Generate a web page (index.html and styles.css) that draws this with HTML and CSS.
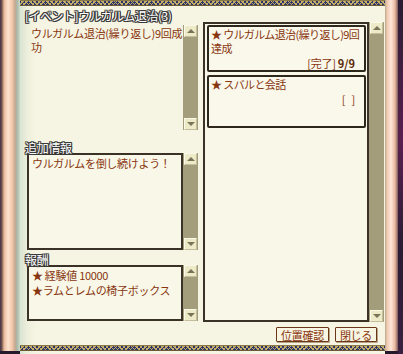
FILE: index.html
```html
<!DOCTYPE html>
<html lang="ja">
<head>
    <meta charset="UTF-8">
    <title>クエスト情報</title>
    <link rel="stylesheet" href="styles.css">
</head>
<body>
<div class="window">
    <div class="rod rod-left"></div>
    <div class="paper">
        <div class="band"></div>
        <div class="sheet">
            <div class="col-left">
                <div class="title">[イベント]ウルガルム退治(3)</div>
                <div class="pane pane-plain">
                    <div class="pane-body">ウルガルム退治(繰り返し)9回成功</div>
                    <div class="scroll"><span class="arrow up"></span><span class="arrow down"></span></div>
                </div>

                <div class="label">追加情報</div>
                <div class="pane pane-info">
                    <div class="pane-body boxed">ウルガルムを倒し続けよう！</div>
                    <div class="scroll"><span class="arrow up"></span><span class="arrow down"></span></div>
                </div>

                <div class="label label-near">報酬</div>
                <div class="pane pane-reward">
                    <div class="pane-body boxed">
                        <div>★ 経験値 10000</div>
                        <div>★ラムとレムの椅子ボックス</div>
                    </div>
                    <div class="scroll"><span class="arrow up"></span><span class="arrow down"></span></div>
                </div>
            </div>

            <div class="col-right">
                <div class="pane pane-quests">
                    <div class="pane-body boxed">
                        <div class="card">
                            <div class="card-text">★ ウルガルム退治(繰り返し)9回達成</div>
                            <div class="card-status">[完了] <b>9/9</b></div>
                        </div>
                        <div class="card card-pending">
                            <div class="card-text">★ スバルと会話</div>
                            <div class="card-status">[ &nbsp; ]</div>
                        </div>
                    </div>
                    <div class="scroll"><span class="arrow up"></span><span class="arrow down"></span></div>
                </div>
                <div class="actions">
                    <button class="btn">位置確認</button>
                    <button class="btn">閉じる</button>
                </div>
            </div>
        </div>
        <div class="band"></div>
    </div>
    <div class="rod rod-right"></div>
    <div class="outside"></div>
</div>
</body>
</html>
```

FILE: styles.css
```css
body {
    margin: 0;
    padding: 0;
    background-color: #241a2c;
    font-family: "Noto Sans CJK JP", "Noto Sans", sans-serif;
    font-size: 11px;
    letter-spacing: -0.3px;
    color: #883610;
}
.window {
    display: flex;
    width: 403px;
    height: 354px;
    overflow: hidden;
}
.rod {
    height: 351px;
}
.rod-left {
    width: 20px;
    background: linear-gradient(to right, #40304a 0, #7a5a50 2px, #e8b898 4px, #fde4d0 8px, #f4c8ac 12px, #c8a890 15px, #a8b8a8 17px, #cfdccb 20px);
}
.rod-right {
    width: 13px;
    background: linear-gradient(to right, #b8a890 0, #f0c8b0 2px, #fde6d8 6px, #eab8a0 10px, #7a5a58 13px);
}
.outside {
    width: 5px;
    background: linear-gradient(to bottom, #2a1c34, #5a2050 40%, #2a1c34 70%, #3a2040);
}
.paper {
    width: 365px;
    display: flex;
    flex-direction: column;
    background: linear-gradient(to right, #d9e4d2 0, #eef0dc 8px, #f6f4e2 16px);
}
.band {
    height: 6px;
    background:
        repeating-linear-gradient(45deg, #c0ac68 0 1px, transparent 1px 3px),
        repeating-linear-gradient(-45deg, #c0ac68 0 1px, #2c3468 1px 3px);
    border-top: 1px solid #8a7848;
    border-bottom: 1px solid #6a5a38;
    box-sizing: border-box;
}
.sheet {
    height: 339px;
    display: flex;
    gap: 5px;
    padding-left: 5px;
}
.col-left {
    width: 173px;
    display: flex;
    flex-direction: column;
}
.col-right {
    width: 181px;
    display: flex;
    flex-direction: column;
}
.title, .label {
    color: #ffffff;
    font-size: 12px;
    text-shadow: -1px 0 #3a3a3a, 1px 0 #3a3a3a, 0 -1px #3a3a3a, 0 1px #3a3a3a,
        -1px -1px #3a3a3a, 1px 1px #3a3a3a, -1px 1px #3a3a3a, 1px -1px #3a3a3a;
    position: relative;
    z-index: 1;
}
.title {
    height: 19px;
    line-height: 19px;
    letter-spacing: -0.5px;
}
.label {
    margin-top: 12px;
    height: 12px;
    line-height: 12px;
    margin-bottom: -1px;
}
.label-near {
    margin-top: 4px;
}
.pane {
    display: flex;
    line-height: 14px;
}
.pane-body {
    flex: 1;
    box-sizing: border-box;
}
.pane-plain {
    height: 105px;
}
.pane-plain .pane-body {
    padding: 1px 0 0 6px;
}
.pane-info {
    height: 97px;
}
.pane-reward {
    height: 56px;
    line-height: 15px;
}
.boxed {
    border: 2px solid #3a3226;
    background-color: #f9f7e7;
}
.pane-info .boxed, .pane-reward .boxed {
    margin-left: 2px;
    padding: 1px 0 0 3px;
}
.scroll {
    width: 15px;
    background-color: #a39d7b;
    display: flex;
    flex-direction: column;
    justify-content: space-between;
}
.arrow {
    height: 12px;
    margin: 0 1px;
    background-color: #edeac8;
    border: 1px solid;
    border-color: #fbf9e8 #c4be9c #c4be9c #fbf9e8;
    box-sizing: border-box;
    display: flex;
    align-items: center;
    justify-content: center;
}
.arrow::after {
    content: "";
    border-left: 4px solid transparent;
    border-right: 4px solid transparent;
}
.arrow.up::after {
    border-bottom: 4px solid #7a7358;
}
.arrow.down::after {
    border-top: 4px solid #7a7358;
}
.pane-quests {
    margin-top: 16px;
    height: 300px;
}
.pane-quests .boxed {
    padding: 1px 1px 0 2px;
    display: flex;
    flex-direction: column;
    gap: 3px;
}
.card {
    border: 2px solid #2e281c;
    border-radius: 2px;
    background-color: #faf8ea;
    line-height: 14px;
    padding: 0 0 0 2px;
}
.card-text {
    letter-spacing: -0.6px;
}
.card-pending {
    min-height: 49px;
}
.card-status {
    text-align: right;
    padding-right: 9px;
    margin-top: 1px;
}
.card-status b {
    color: #5a2808;
    letter-spacing: 0;
}
.actions {
    display: flex;
    justify-content: flex-end;
    gap: 6px;
    margin-top: 5px;
    padding-right: 7px;
}
.btn {
    font-family: inherit;
    font-size: 11px;
    letter-spacing: -0.3px;
    color: #883610;
    background-color: #f8f5e2;
    border: 1px solid #6a3818;
    border-radius: 1px;
    box-shadow: 1px 1px 0 #b8a484;
    height: 15px;
    line-height: 12px;
    padding: 0 4px;
    margin: 0;
}
```
